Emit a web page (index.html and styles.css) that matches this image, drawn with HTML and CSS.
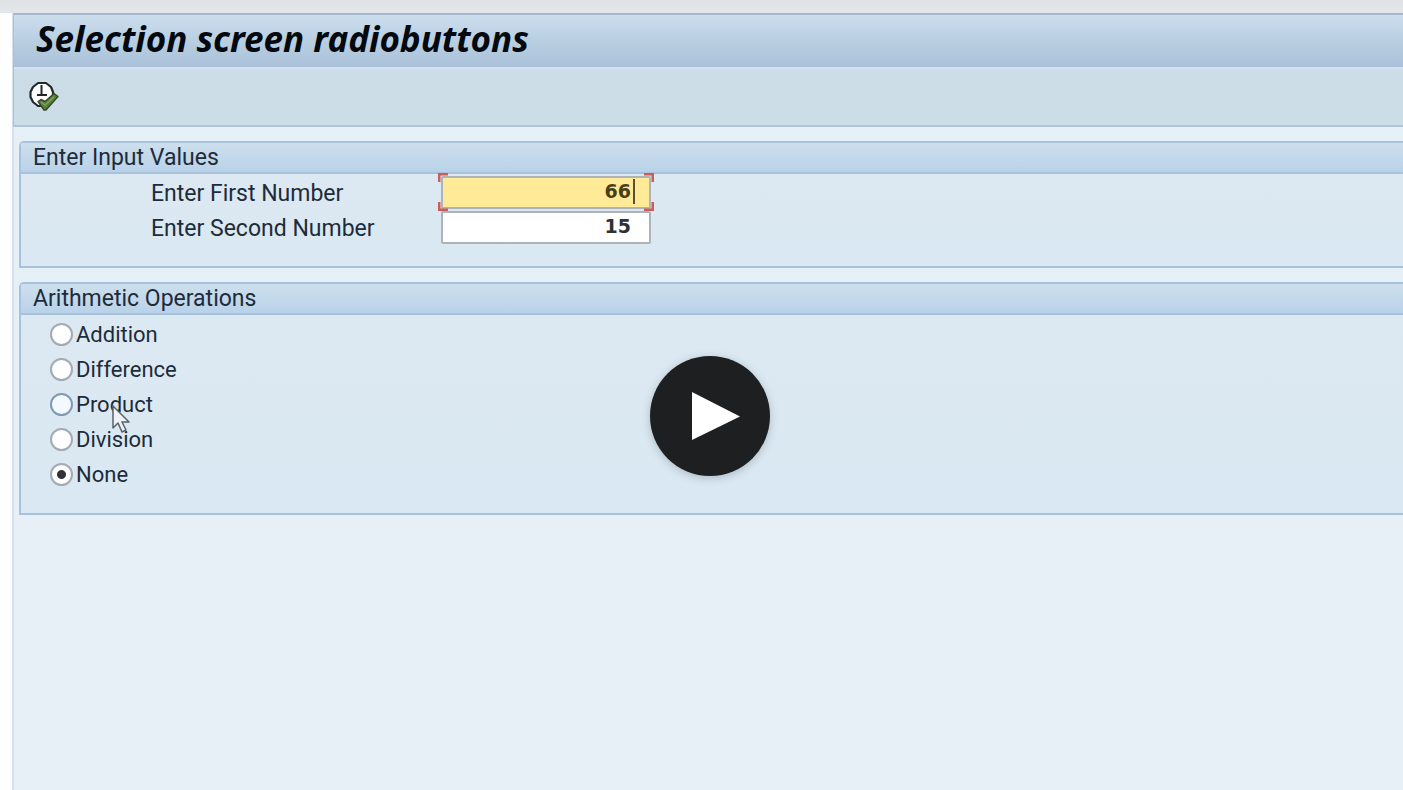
FILE: index.html
```html
<!DOCTYPE html>
<html lang="en">
<head>
<meta charset="utf-8">
<title>Selection screen radiobuttons</title>
<link rel="stylesheet" href="styles.css">
</head>
<body>
<div class="topstrip"></div>
<main class="window">
  <header class="titlebar"><h1 class="title">Selection screen radiobuttons</h1></header>
  <div class="toolbar">
    <button class="execute" type="button" aria-label="Execute">
      <svg width="30" height="30" viewBox="0 0 30 30" aria-hidden="true">
        <path d="M9 2h8l5 4 2 5v6l-5 7-4 1H9l-5-4-2.500-5v-5L4 6z" fill="#fff" stroke="#23282a" stroke-width="2.2" stroke-linejoin="round"/>
        <path d="M12.500 4v11M8 14h10" fill="none" stroke="#20262c" stroke-width="2"/>
        <path d="M9 20.500l3-2 4 2 9-8 4 3-12 13.500h-2z" fill="#55803a" stroke="#35482a" stroke-width="1.4" stroke-linejoin="round"/>
        <path d="M12 21l4 3 9-8" fill="none" stroke="#7da35a" stroke-width="1.4"/>
      </svg>
    </button>
  </div>
  <form class="content">
    <section class="group">
      <h2 class="group-title">Enter Input Values</h2>
      <div class="fields">
        <div class="field">
          <label class="field-label" for="first">Enter First Number</label>
          <div class="box focused">
            <input class="number" id="first" type="text" value="66">
            <span class="caret"></span>
            <svg class="corners" viewBox="0 0 216 38" aria-hidden="true">
              <path d="M1 9V1h9M206 1h9v8M1 29v8h9M206 37h9v-8" fill="none" stroke="#cd5b56" stroke-width="3"/>
            </svg>
          </div>
        </div>
        <div class="field">
          <label class="field-label" for="second">Enter Second Number</label>
          <div class="box"><input class="number" id="second" type="text" value="15"></div>
        </div>
      </div>
    </section>
    <section class="group">
      <h2 class="group-title">Arithmetic Operations</h2>
      <div class="options">
        <label class="option"><input class="radio" type="radio" name="op">Addition</label>
        <label class="option"><input class="radio" type="radio" name="op">Difference</label>
        <label class="option"><input class="radio hover" type="radio" name="op">Product</label>
        <label class="option"><input class="radio" type="radio" name="op">Division</label>
        <label class="option"><input class="radio" type="radio" name="op" checked>None</label>
      </div>
    </section>
  </form>
</main>
<svg class="pointer" width="18" height="30" viewBox="0 0 18 30" aria-hidden="true">
  <path d="M1 2v22l5-5 4 9 4-2-4-8h7z" fill="#eef2f6" stroke="#59616b" stroke-width="1.5" stroke-linejoin="round"/>
</svg>
<button class="play" type="button" aria-label="Play video">
  <svg width="120" height="120" viewBox="0 0 120 120" aria-hidden="true"><path d="M42 36l48 24.500-48 23.500z" fill="#fff"/></svg>
</button>
</body>
</html>
```
FILE: styles.css
```css
* { box-sizing: border-box; }
body {
  margin: 0;
  min-height: 100vh;
  display: flex;
  flex-direction: column;
  background: #fdfefe;
  color: #1d2b3a;
  font-family: Roboto, "Noto Sans", sans-serif;
  overflow-x: hidden;
}
.topstrip { height: 13px; background: linear-gradient(#dfe3e6, #e4e7e9); }
.window {
  flex: 1;
  margin-left: 12px;
  border-left: 2px solid #d5e2ed;
  background: linear-gradient(#e8f0f8, #e5f0f6 150px, #e8f0f7);
}
.titlebar {
  height: 56px;
  padding-left: 22px;
  border-top: 2px solid #a5b9cc;
  border-bottom: 2px solid #d4e2ee;
  background: linear-gradient(#cbdeee, #b9cfe1 50%, #a9c1da);
}
.title {
  margin: 0;
  font: italic bold 35px/48px "Noto Sans", sans-serif;
  color: #04090f;
}
.toolbar {
  height: 58px;
  padding: 12px 0 0 15px;
  border-bottom: 2px solid #afc4d5;
  background: linear-gradient(#cddce8, #cbdde6);
}
.titlebar, .toolbar { box-shadow: -1px 0 #acc0d2; }
.execute { display: block; padding: 0; border: 0; background: none; line-height: 0; }
.content { padding: 14px 0 0 5px; }
.group {
  margin-bottom: 14px;
  border: 2px solid #a9c2dc;
  border-right: 0;
  border-radius: 5px 0 0 0;
  background: linear-gradient(#dce9f2, #dae8f3);
}
.group-title {
  margin: 0;
  padding-left: 12px;
  height: 31px;
  border-bottom: 2px solid #a9c2dc;
  background: linear-gradient(#cddfed, #b9d2e9);
  font-size: 23px;
  line-height: 30px;
  font-weight: 400;
}
.fields { padding: 2px 0 20px 130px; }
.field { display: flex; height: 35px; }
.field-label { width: 290px; font-size: 23px; line-height: 35px; }
.box { position: relative; width: 210px; height: 33px; }
.number {
  display: block;
  width: 100%;
  height: 33px;
  padding: 0 18px 4px 4px;
  border: 2px solid #adb3b8;
  border-radius: 2px;
  background: #fff;
  color: #303132;
  font: bold 19px "DejaVu Sans", sans-serif;
  text-align: right;
}
.focused .number { background: #ffea97; color: #4a3f18; }
.caret { position: absolute; right: 16px; top: 3px; width: 2px; height: 25px; background: #5b522d; }
.corners { position: absolute; left: -3px; top: -3px; width: 216px; height: 38px; z-index: 1; }
.options { padding: 2px 0 21px 29px; }
.option { display: flex; align-items: center; gap: 3px; height: 35px; font-size: 22px; }
.radio {
  appearance: none;
  width: 23px;
  height: 23px;
  margin: 0;
  border: 2px solid #a2aab2;
  border-radius: 50%;
  background: #fff;
}
.radio.hover { border-color: #7f9ab5; background: #f3f9ff; }
.radio:checked { background: radial-gradient(circle, #303338 4px, #fff 5px); }
.pointer { position: absolute; left: 112px; top: 404px; }
.play {
  position: absolute;
  left: 650px;
  top: 356px;
  width: 120px;
  height: 120px;
  padding: 0;
  border: 0;
  border-radius: 50%;
  background: #1e1f20;
  box-shadow: 0 2px 8px rgba(30, 50, 60, .25);
}
```
